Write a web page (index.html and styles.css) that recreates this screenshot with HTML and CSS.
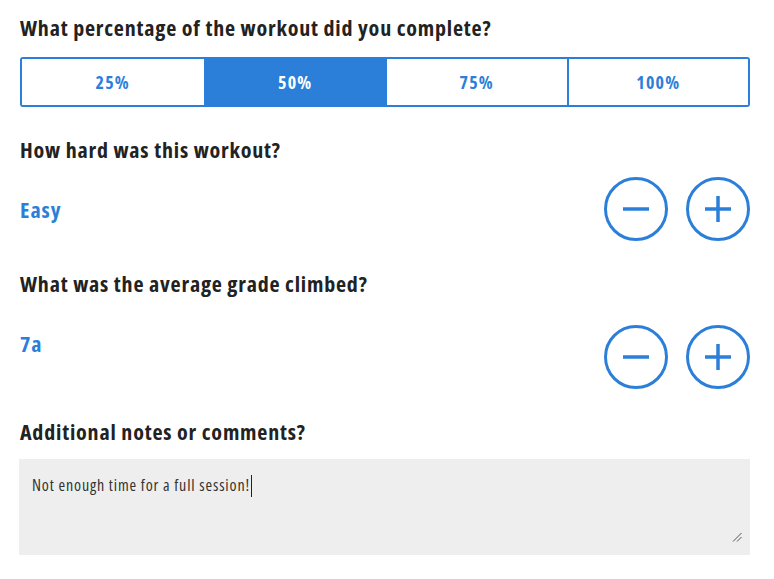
FILE: index.html
```html
<!DOCTYPE html>
<html lang="en">
<head>
<meta charset="utf-8">
<title>Workout feedback</title>
<link rel="stylesheet" href="styles.css">
</head>
<body>
<main class="form">
  <h2 class="q q-first">What percentage of the workout did you complete?</h2>
  <div class="seg">
    <button class="seg-item">25%</button>
    <button class="seg-item is-active">50%</button>
    <button class="seg-item">75%</button>
    <button class="seg-item">100%</button>
  </div>

  <h2 class="q">How hard was this workout?</h2>
  <div class="stepper stepper-a">
    <span class="value">Easy</span>
    <div class="btns">
      <button class="circ" aria-label="Decrease"><svg viewBox="0 0 30 30" width="30" height="30"><path d="M2 15H28" /></svg></button>
      <button class="circ" aria-label="Increase"><svg viewBox="0 0 30 30" width="30" height="30"><path d="M2 15H28M15 2V28" /></svg></button>
    </div>
  </div>

  <h2 class="q">What was the average grade climbed?</h2>
  <div class="stepper stepper-b">
    <span class="value">7a</span>
    <div class="btns">
      <button class="circ" aria-label="Decrease"><svg viewBox="0 0 30 30" width="30" height="30"><path d="M2 15H28" /></svg></button>
      <button class="circ" aria-label="Increase"><svg viewBox="0 0 30 30" width="30" height="30"><path d="M2 15H28M15 2V28" /></svg></button>
    </div>
  </div>

  <h2 class="q">Additional notes or comments?</h2>
  <div class="notes-wrap">
    <textarea class="notes">Not enough time for a full session!</textarea>
    <span class="caret"></span>
    <svg class="grip" viewBox="0 0 10 10" width="10" height="10"><path d="M1 9.5L9.5 1M5 9.5L9.5 5" /></svg>
  </div>
</main>
</body>
</html>
```

FILE: styles.css
```css
* { box-sizing: border-box; }
html, body { margin: 0; padding: 0; background: #fff; }
body {
  font-family: "Open Sans", "DejaVu Sans Condensed", sans-serif;
  font-stretch: 75%;
  color: #222;
}
.form {
  width: 774px;
  padding: 0 24px 0 20px;
}
.q {
  margin: 29px 0 0;
  font-size: 22px;
  line-height: 26px;
  font-weight: bold;
  letter-spacing: 0.8px;
  color: #222;
}
.q-first { margin-top: 14px; }

.seg {
  display: grid;
  grid-template-columns: repeat(4, 1fr);
  margin-top: 17px;
  height: 50px;
  border: 2px solid #2b7fd9;
  border-radius: 3px;
  overflow: hidden;
}
.seg-item {
  font-family: inherit;
  font-stretch: 75%;
  font-size: 18px;
  font-weight: bold;
  letter-spacing: 1.2px;
  color: #2b7fd9;
  background: #fff;
  border: 0;
  border-left: 2px solid #2b7fd9;
  padding: 0;
  margin: 0;
}
.seg-item:first-child { border-left: 0; }
.seg-item.is-active { background: #2b7fd9; color: #fff; }

.stepper {
  display: flex;
  justify-content: space-between;
  align-items: flex-start;
}
.stepper-a { margin-top: 15px; }
.stepper-a .value { margin-top: 19px; }
.stepper-b { margin-top: 29px; }
.stepper-b .value { margin-top: 5px; }
.value {
  font-size: 22px;
  line-height: 26px;
  font-weight: bold;
  letter-spacing: 1px;
  color: #2b7fd9;
}
.btns { display: flex; gap: 18px; }
.circ {
  width: 64px;
  height: 64px;
  border-radius: 50%;
  border: 3px solid #2b7fd9;
  background: #fff;
  padding: 0;
  display: flex;
  align-items: center;
  justify-content: center;
}
.circ svg { display: block; }
.circ path { stroke: #2b7fd9; stroke-width: 3.5; fill: none; }

.notes-wrap {
  position: relative;
  width: 731px;
  margin: 15px 0 0 -1px;
}
.notes {
  display: block;
  width: 100%;
  height: 96px;
  margin: 0;
  padding: 16px 13px;
  border: 0;
  background: #eeeeee;
  font-family: inherit;
  font-stretch: 75%;
  font-size: 16px;
  line-height: 20px;
  letter-spacing: 0.85px;
  color: #333;
  outline: none;
  resize: none;
}
.caret {
  position: absolute;
  left: 232px;
  top: 16px;
  width: 1px;
  height: 22px;
  background: #222;
}
.grip {
  position: absolute;
  right: 8px;
  bottom: 13px;
}
.grip path { stroke: #555; stroke-width: 1; fill: none; }
```
